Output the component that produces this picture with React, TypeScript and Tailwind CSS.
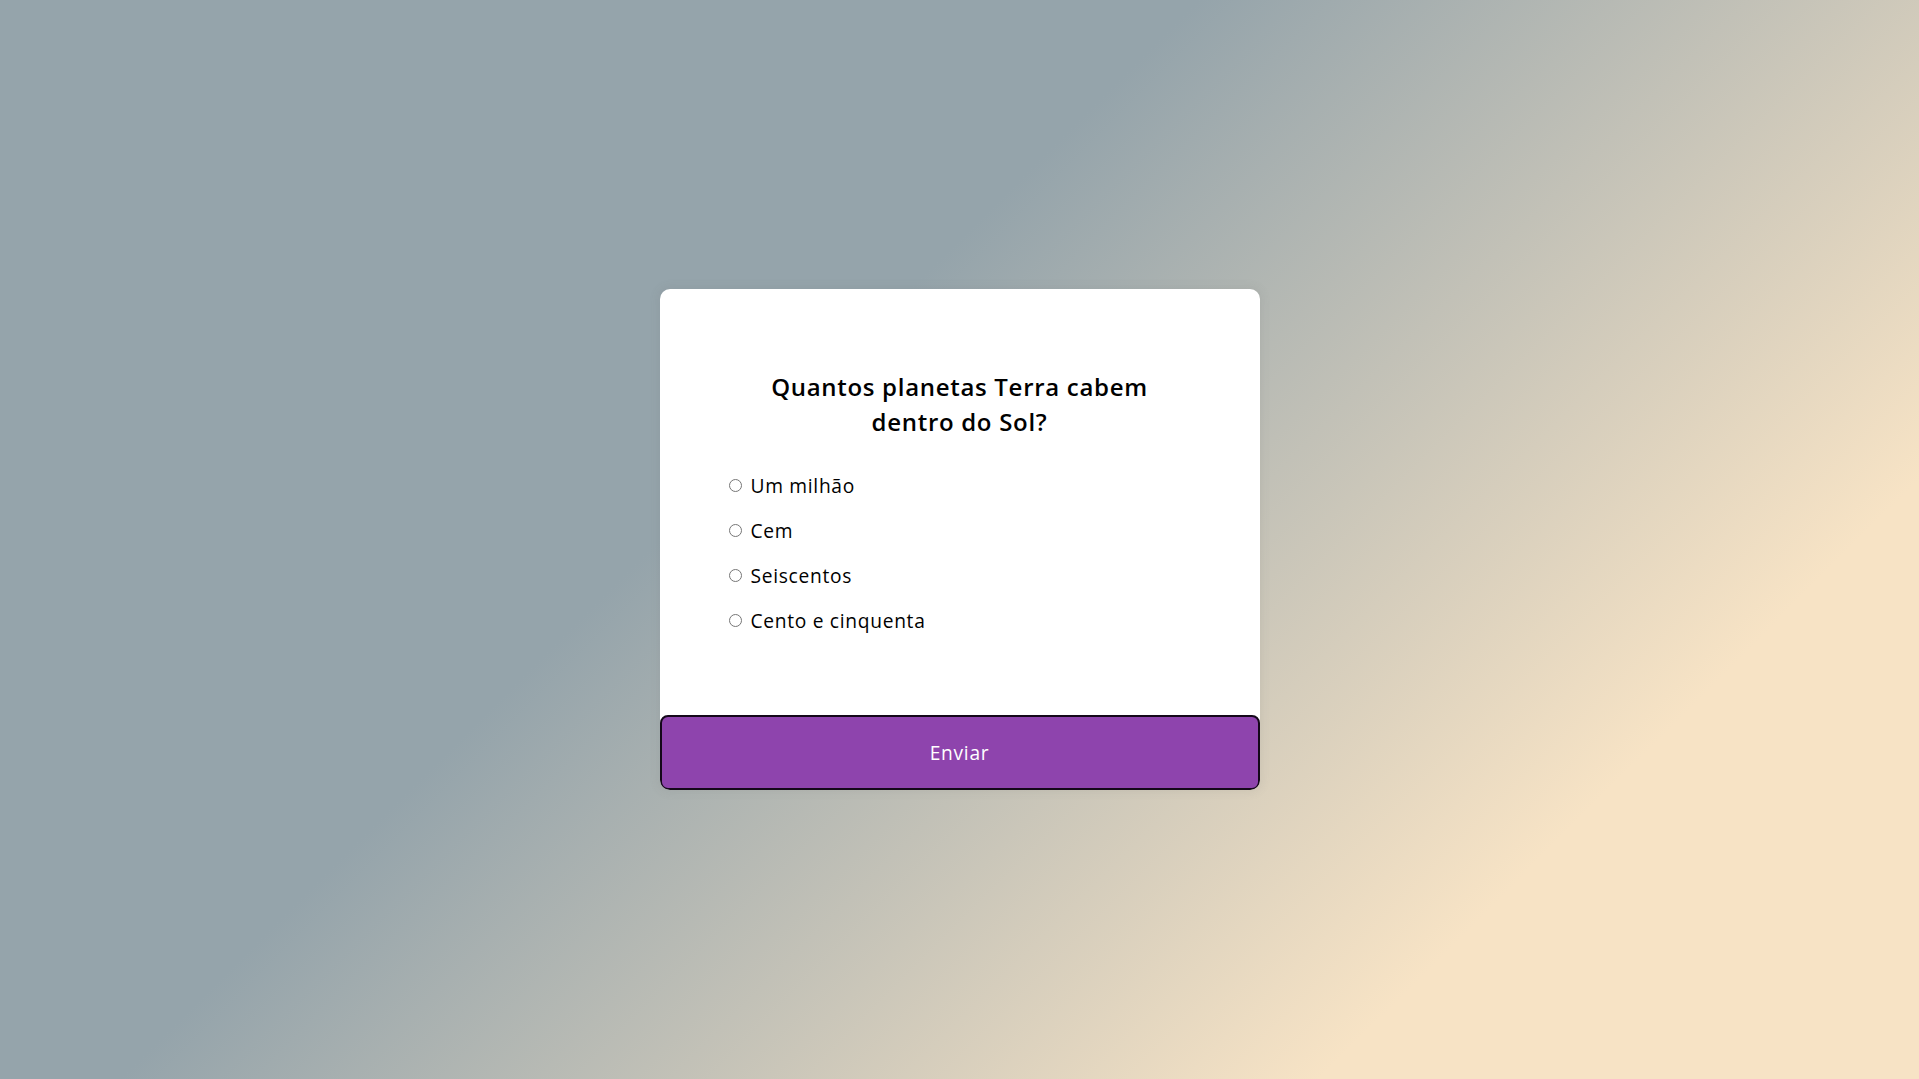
import React from "react";

const options = ["Um milhão", "Cem", "Seiscentos", "Cento e cinquenta"];

export default function App() {
  return (
    <div
      className="min-h-screen w-full flex items-center justify-center bg-[linear-gradient(135deg,#95a4ab_40%,#f7e3c5_80%)]"
      style={{ fontFamily: '"Open Sans", "Liberation Sans", sans-serif' }}
    >
      <div className="w-[600px] bg-white rounded-[10px] overflow-hidden shadow-[0_0_10px_2px_rgba(100,100,100,0.1)]">
        {/* Quiz header */}
        <div className="p-16">
          <h2 className="p-4 text-center text-[24px] leading-[35px] font-semibold tracking-[0.7px] text-black">
            Quantos planetas Terra cabem
            <br />
            dentro do Sol?
          </h2>

          <ul className="list-none p-0">
            {options.map((opt, i) => (
              <li key={opt} className="my-4 flex items-center text-[19.2px] leading-[29px] tracking-[0.7px] text-black">
                <input
                  type="radio"
                  name="answer"
                  id={`a${i}`}
                  className="ml-[5px] mr-[3px] w-[13px] h-[13px]"
                />
                <label htmlFor={`a${i}`} className="ml-[6px]">
                  {opt}
                </label>
              </li>
            ))}
          </ul>
        </div>

        <button className="block w-full bg-[#8e44ad] text-white text-[19.2px] leading-[29px] tracking-[0.7px] py-[20.8px] border-2 border-[#14081a] rounded-[8px] cursor-pointer">
          Enviar
        </button>
      </div>
    </div>
  );
}
